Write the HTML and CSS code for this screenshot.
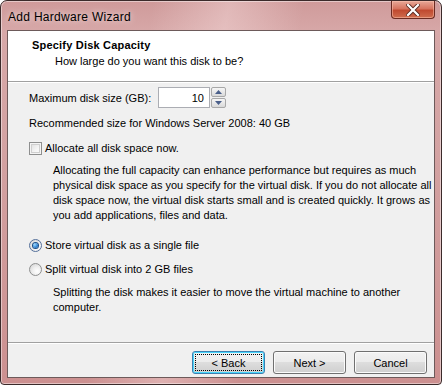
FILE: index.html
```html
<!DOCTYPE html>
<html>
<head>
<meta charset="utf-8">
<link rel="stylesheet" href="styles.css">
</head>
<body>
<div class="window">
  <div class="titlebar">
    <span class="title">Add Hardware Wizard</span>
    <div class="close">
      <svg width="14" height="12" viewBox="0 0 14 12"><path d="M2 1 L12 11 M12 1 L2 11" stroke="#5a2a22" stroke-width="4" stroke-linecap="square"/><path d="M2 1 L12 11 M12 1 L2 11" stroke="#ffffff" stroke-width="2.2" stroke-linecap="square"/></svg>
    </div>
  </div>
  <div class="client">
    <div class="header">
      <div class="h-title">Specify Disk Capacity</div>
      <div class="h-sub">How large do you want this disk to be?</div>
    </div>
    <div class="body">
      <div class="size-row">
        <span class="lbl">Maximum disk size (GB):</span>
        <div class="spin">
          <div class="spin-input">10</div>
          <div class="spin-btns">
            <div class="sb"><svg width="7" height="4" viewBox="0 0 7 4"><path d="M0 4 L3.5 0 L7 4 Z" fill="#4a5f8a"/></svg></div>
            <div class="sb"><svg width="7" height="4" viewBox="0 0 7 4"><path d="M0 0 L3.5 4 L7 0 Z" fill="#4a5f8a"/></svg></div>
          </div>
        </div>
      </div>
      <div class="rec">Recommended size for Windows Server 2008: 40 GB</div>
      <div class="opt">
        <span class="check"></span>
        <span>Allocate all disk space now.</span>
      </div>
      <p class="desc">Allocating the full capacity can enhance performance but requires as much<br>physical disk space as you specify for the virtual disk. If you do not allocate all<br>disk space now, the virtual disk starts small and is created quickly. It grows as<br>you add applications, files and data.</p>
      <div class="opt radio-first">
        <span class="radio on"><span class="dot"></span></span>
        <span>Store virtual disk as a single file</span>
      </div>
      <div class="opt radio-second">
        <span class="radio"></span>
        <span>Split virtual disk into 2 GB files</span>
      </div>
      <p class="desc desc2">Splitting the disk makes it easier to move the virtual machine to another<br>computer.</p>
    </div>
    <div class="footer">
      <button class="btn focus"><span class="focus-ring">&lt; Back</span></button>
      <button class="btn">Next &gt;</button>
      <button class="btn">Cancel</button>
    </div>
  </div>
</div>
</body>
</html>
```

FILE: styles.css
```css
html, body {
  margin: 0;
  padding: 0;
  background: #ffffff;
}
.window {
  box-sizing: border-box;
  width: 442px;
  height: 385px;
  border: 1px solid #3b2a2a;
  border-radius: 7px 7px 4px 4px;
  background:
    linear-gradient(100deg, rgba(255,255,255,0) 30%, rgba(255,235,235,0.35) 45%, rgba(255,255,255,0) 60%),
    linear-gradient(180deg, #cf9a9a 0%, #d7a8a8 8%, #d3a2a2 40%, #cc9090 100%);
  padding: 0 6px 6px 6px;
  display: flex;
  flex-direction: column;
  font-family: "Liberation Sans", Arial, sans-serif;
  font-size: 11px;
  color: #000;
  box-shadow: inset 0 0 0 1px rgba(255,255,255,0.45);
}
.titlebar {
  height: 29px;
  display: flex;
  justify-content: space-between;
  align-items: flex-start;
  flex-shrink: 0;
}
.title {
  font-size: 12px;
  letter-spacing: 0.3px;
  margin-top: 9px;
  margin-left: 1px;
  color: #000;
  text-shadow: 0 0 6px rgba(255,255,255,0.8);
}
.close {
  width: 44px;
  height: 18px;
  box-sizing: border-box;
  border: 1px solid #6b2b22;
  border-top: none;
  border-radius: 0 0 4px 4px;
  background: linear-gradient(180deg, #e8a898 0%, #d7745f 45%, #c04a30 55%, #cf6c4e 100%);
  display: flex;
  align-items: center;
  justify-content: center;
  box-shadow: inset 0 0 0 1px rgba(255,200,180,0.5);
}
.client {
  flex: 1;
  border: 1px solid #6d5a5a;
  background: #f0f0f0;
  display: flex;
  flex-direction: column;
}
.header {
  height: 51px;
  background: #ffffff;
  border-bottom: 1px solid #a0a0a0;
  box-shadow: 0 1px 0 #ffffff;
  box-sizing: border-box;
  padding: 7px 0 0 24px;
  flex-shrink: 0;
}
.h-title {
  font-weight: bold;
  font-size: 11px;
  letter-spacing: 0.2px;
  line-height: 14px;
}
.h-sub {
  margin-top: 2px;
  margin-left: 23px;
  line-height: 14px;
}
.body {
  flex: 1;
  padding: 5px 0 0 21px;
}
.size-row {
  display: flex;
  align-items: center;
  height: 21px;
}
.lbl {
  width: 129px;
}
.spin {
  display: flex;
  align-items: stretch;
  height: 21px;
}
.spin-input {
  box-sizing: border-box;
  width: 52px;
  height: 21px;
  background: #fff;
  border: 1px solid #abadb3;
  text-align: right;
  padding: 3px 5px 0 0;
  line-height: 14px;
}
.spin-btns {
  display: flex;
  flex-direction: column;
  gap: 1px;
  width: 15px;
  margin-left: 1px;
}
.sb {
  flex: 1;
  box-sizing: border-box;
  border: 1px solid #a8a8a8;
  border-radius: 2px;
  background: linear-gradient(180deg, #f6f6f6 0%, #e8e8e8 50%, #d9d9d9 100%);
  display: flex;
  align-items: center;
  justify-content: center;
}
.rec {
  margin-top: 8px;
  line-height: 14px;
}
.opt {
  display: flex;
  align-items: center;
  gap: 3px;
  height: 14px;
  line-height: 14px;
}
.rec + .opt {
  margin-top: 11px;
}
.check {
  box-sizing: border-box;
  width: 13px;
  height: 13px;
  border: 1px solid #8e8f8f;
  background: linear-gradient(135deg, #dcdcdc 0%, #f5f5f5 60%, #fefefe 100%);
  box-shadow: inset 0 0 0 1px #f4f4f4, inset 0 0 0 2px #cfcfcf;
}
.desc {
  margin: 8px 0 0 24px;
  line-height: 15px;
}
.radio-first {
  margin-top: 15px;
}
.radio-second {
  margin-top: 10px;
}
.radio {
  box-sizing: border-box;
  width: 13px;
  height: 13px;
  border-radius: 50%;
  border: 1px solid #8e8f8f;
  background: radial-gradient(circle at 65% 65%, #ffffff 0%, #f0f0f0 40%, #cfcfcf 100%);
  display: flex;
  align-items: center;
  justify-content: center;
}
.radio.on {
  border-color: #55709b;
}
.dot {
  width: 5px;
  height: 5px;
  border-radius: 50%;
  background: radial-gradient(circle at 35% 35%, #9fdcff 0%, #2c7fd1 60%, #124c8c 100%);
  box-shadow: 0 0 0 1px #1d4f85;
}
.desc2 {
  margin-top: 9px;
}
.footer {
  height: 35px;
  flex-shrink: 0;
  border-top: 1px solid #a0a0a0;
  box-shadow: inset 0 1px 0 #ffffff;
  display: flex;
  justify-content: flex-end;
  gap: 8px;
  padding: 8px 7px 0 0;
  box-sizing: border-box;
}
.btn {
  box-sizing: border-box;
  width: 73px;
  height: 23px;
  border: 1px solid #707070;
  border-radius: 3px;
  background: linear-gradient(180deg, #f2f2f2 0%, #ebebeb 49%, #dddddd 50%, #cfcfcf 100%);
  font-family: "Liberation Sans", Arial, sans-serif;
  font-size: 11px;
  color: #000;
  padding: 0;
  box-shadow: inset 0 0 0 1px #fbfbfb;
  display: flex;
  align-items: center;
  justify-content: center;
}
.btn.focus {
  border-color: #3c7fb1;
  box-shadow: inset 0 0 0 1px #48d5fb;
}
.focus-ring {
  box-sizing: border-box;
  width: 67px;
  height: 17px;
  border: 1px dotted #000;
  display: flex;
  align-items: center;
  justify-content: center;
}
```
